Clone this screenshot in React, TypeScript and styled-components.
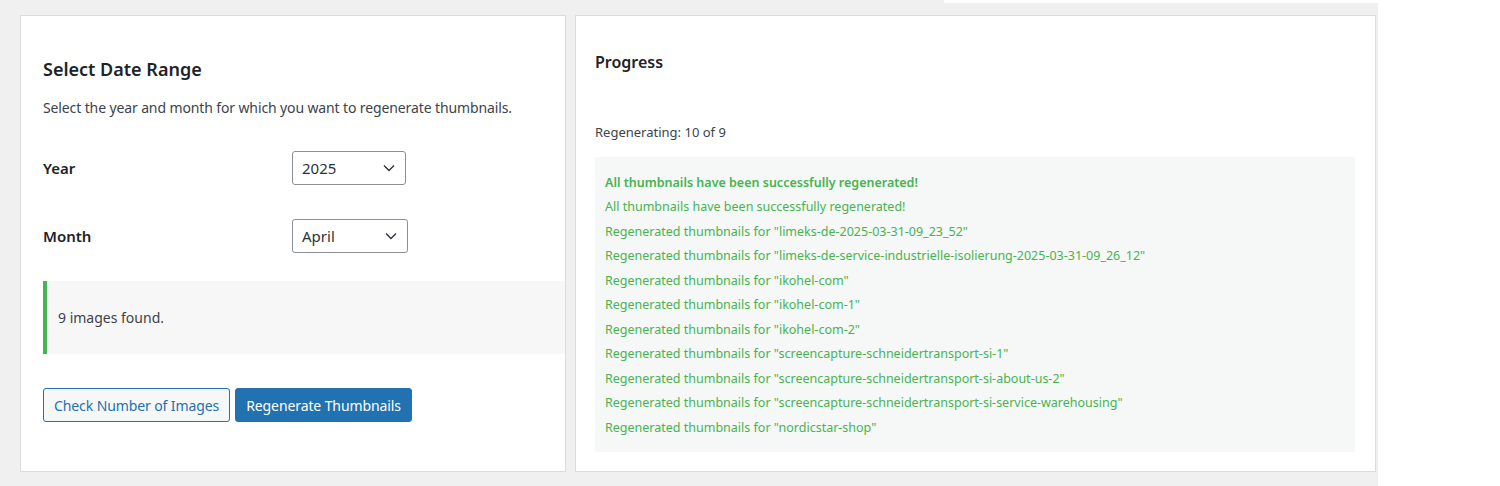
import React from "react";
import styled, { createGlobalStyle } from "styled-components";

const GlobalStyle = createGlobalStyle`
  html, body { margin: 0; padding: 0; background: #ffffff; }
  body { font-family: "Noto Sans", "Open Sans", sans-serif; color: #1d2327; }
`;

const Page = styled.div`
  width: 1378px;
  height: 486px;
  background: #f0f0f1;
  display: flex;
  flex-direction: column;
`;

const TopStrip = styled.div`
  height: 3px;
  margin-left: 944px;
  background: #ffffff;
`;

const Columns = styled.div`
  display: flex;
  gap: 9px;
  padding-left: 20px;
  margin-top: 12px;
`;

const Card = styled.section<{ $w: number; $pl: number; $pr: number }>`
  box-sizing: border-box;
  width: ${(p) => p.$w}px;
  height: 457px;
  background: #ffffff;
  border: 1px solid #dcdcde;
  padding: 0 ${(p) => p.$pr}px 0 ${(p) => p.$pl}px;
  display: flex;
  flex-direction: column;
`;

const Title = styled.h2<{ $size: number; $mt: number }>`
  margin: ${(p) => p.$mt}px 0 0;
  font-size: ${(p) => p.$size}px;
  line-height: 1.3;
  font-weight: 600;
  color: #1d2327;
`;

const Desc = styled.p`
  margin: 17px 0 0;
  font-size: 14px;
  line-height: 20px;
  letter-spacing: -0.12px;
  color: #3c434a;
`;

const FieldRow = styled.div<{ $mt: number }>`
  display: flex;
  align-items: center;
  margin-top: ${(p) => p.$mt}px;
`;

const Label = styled.label`
  width: 249px;
  font-size: 15px;
  font-weight: 600;
  color: #1d2327;
`;

const SelectBox = styled.div<{ $w: number }>`
  box-sizing: border-box;
  width: ${(p) => p.$w}px;
  height: 34px;
  border: 1px solid #8c8f94;
  border-radius: 3px;
  display: flex;
  align-items: center;
  justify-content: space-between;
  padding: 0 10px 0 9px;
  font-size: 15px;
  color: #2c3338;
  background: #fff;
`;

const Notice = styled.div`
  margin-top: 28px;
  height: 73px;
  background: #f7f7f7;
  border-left: 4px solid #46b450;
  display: flex;
  align-items: center;
  padding-left: 11px;
  font-size: 14px;
  color: #3c434a;
`;

const ButtonRow = styled.div`
  display: flex;
  gap: 5px;
  margin-top: 34px;
`;

const Button = styled.button<{ $primary?: boolean }>`
  box-sizing: border-box;
  height: 34px;
  padding: 0 10px;
  border-radius: 3px;
  border: 1px solid #2271b1;
  background: ${(p) => (p.$primary ? "#2271b1" : "#f6f7f7")};
  color: ${(p) => (p.$primary ? "#ffffff" : "#2271b1")};
  font-family: inherit;
  font-size: 14px;
  letter-spacing: -0.1px;
  cursor: pointer;
`;

const Status = styled.p`
  margin: 50px 0 0;
  font-size: 13px;
  line-height: 18px;
  color: #3c434a;
`;

const LogBox = styled.div`
  margin-top: 16px;
  flex: 1;
  margin-bottom: 19px;
  background: #f6f7f7;
  padding: 14px 10px 0;
  display: flex;
  flex-direction: column;
`;

const LogLine = styled.div<{ $bold?: boolean }>`
  font-size: 12.5px;
  line-height: 24.5px;
  color: #46b450;
  font-weight: ${(p) => (p.$bold ? 600 : 400)};
`;

const Chevron = () => (
  <svg width="12" height="8" viewBox="0 0 12 8" fill="none">
    <path d="M1 1.5L6 6.5L11 1.5" stroke="#2c3338" strokeWidth="1.4" />
  </svg>
);

const logs = [
  "All thumbnails have been successfully regenerated!",
  'Regenerated thumbnails for "limeks-de-2025-03-31-09_23_52"',
  'Regenerated thumbnails for "limeks-de-service-industrielle-isolierung-2025-03-31-09_26_12"',
  'Regenerated thumbnails for "ikohel-com"',
  'Regenerated thumbnails for "ikohel-com-1"',
  'Regenerated thumbnails for "ikohel-com-2"',
  'Regenerated thumbnails for "screencapture-schneidertransport-si-1"',
  'Regenerated thumbnails for "screencapture-schneidertransport-si-about-us-2"',
  'Regenerated thumbnails for "screencapture-schneidertransport-si-service-warehousing"',
  'Regenerated thumbnails for "nordicstar-shop"',
];

export default function App() {
  return (
    <>
      <GlobalStyle />
      <Page>
        <TopStrip />
        <Columns>
          <Card $w={546} $pl={22} $pr={0}>
            <Title $size={18} $mt={42}>Select Date Range</Title>
            <Desc>Select the year and month for which you want to regenerate thumbnails.</Desc>
            <FieldRow $mt={33}>
              <Label>Year</Label>
              <SelectBox $w={114}>
                <span>2025</span>
                <Chevron />
              </SelectBox>
            </FieldRow>
            <FieldRow $mt={34}>
              <Label>Month</Label>
              <SelectBox $w={116}>
                <span>April</span>
                <Chevron />
              </SelectBox>
            </FieldRow>
            <Notice>9 images found.</Notice>
            <ButtonRow>
              <Button>Check Number of Images</Button>
              <Button $primary>Regenerate Thumbnails</Button>
            </ButtonRow>
          </Card>
          <Card $w={801} $pl={19} $pr={20}>
            <Title $size={16} $mt={36}>Progress</Title>
            <Status>Regenerating: 10 of 9</Status>
            <LogBox>
              <LogLine $bold>All thumbnails have been successfully regenerated!</LogLine>
              {logs.map((l, i) => (
                <LogLine key={i}>{l}</LogLine>
              ))}
            </LogBox>
          </Card>
        </Columns>
      </Page>
    </>
  );
}
